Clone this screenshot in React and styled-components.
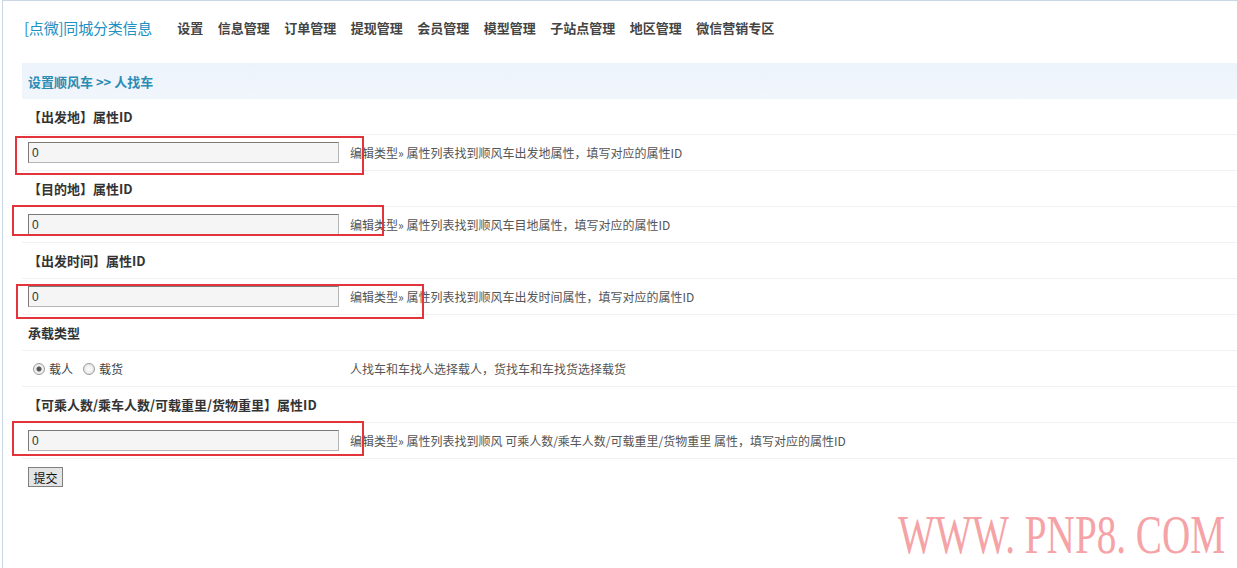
import React from "react"
import styled, { createGlobalStyle } from "styled-components"

const GlobalStyle = createGlobalStyle`
  html, body {
    margin: 0;
    padding: 0;
    background: #fff;
  }
  body {
    font-family: "Noto Sans CJK SC", "Liberation Sans", sans-serif;
    font-size: 12px;
    color: #333;
  }
`

const Page = styled.div`
  position: relative;
  height: 567px;
  margin-left: 2px;
  border-top: 1px solid #c9d7e4;
  border-left: 1px solid #c9d7e4;
  overflow: hidden;
`

const Header = styled.header`
  display: flex;
  align-items: center;
  height: 62px;
  padding: 0 0 10px 21px;
  box-sizing: border-box;
`

const Logo = styled.div`
  font-size: 15px;
  color: #2190c2;
  margin-right: 25px;
  letter-spacing: -0.2px;
`

const Nav = styled.nav`
  display: flex;
  gap: 14.5px;
`

const NavLink = styled.a`
  font-size: 13px;
  font-weight: bold;
  color: #444;
  text-decoration: none;
`

const Crumb = styled.div`
  display: flex;
  align-items: center;
  height: 36px;
  margin-left: 19px;
  padding-left: 6px;
  background: linear-gradient(#edf3fc, #f1f6fb);
  font-size: 13px;
  font-weight: bold;
  color: #2b8cb4;
`

const Table = styled.div`
  margin-left: 19px;
`

const Row = styled.div`
  display: grid;
  grid-template-columns: 324px 1fr;
  align-items: center;
  height: 36px;
  border-bottom: ${(p) => (p.$last ? "none" : "1px solid #f1f1f1")};
  box-sizing: border-box;
`

const Label = styled.div`
  grid-column: 1 / 3;
  padding-left: 6px;
  font-size: 13px;
  font-weight: bold;
  color: #333;
`

const Cell = styled.div`
  display: flex;
  align-items: center;
  padding-left: 6px;
`

const Help = styled.div`
  padding-left: 4px;
  font-size: 12px;
  color: #555;
`

const Input = styled.input`
  box-sizing: border-box;
  width: 311px;
  height: 21px;
  padding: 0 3px;
  border: 1px solid #b5b5b5;
  border-top-color: #7a7a7a;
  border-left-color: #7a7a7a;
  background: #f5f5f5;
  font-family: "Liberation Sans", sans-serif;
  font-size: 12px;
  color: #333;
  outline: none;
`

const Radio = styled.label`
  display: flex;
  align-items: center;
  margin-left: 5px;
  margin-right: 5px;
  font-size: 12px;
  color: #444;
`

const Dot = styled.span`
  width: 10px;
  height: 10px;
  margin-right: 4px;
  border-radius: 50%;
  border: 1px solid #9a9a9a;
  background: ${(p) =>
    p.$on
      ? "radial-gradient(circle, #555 0 2px, #eee 3px)"
      : "radial-gradient(circle, #fff, #ddd)"};
`

const Submit = styled.button`
  width: 35px;
  height: 20px;
  padding: 0;
  border: 1px solid #7f7f7f;
  background: #e4e4e4;
  font-family: "Noto Sans CJK SC", sans-serif;
  font-size: 12px;
  color: #111;
`

const Mark = styled.div`
  position: absolute;
  box-sizing: border-box;
  border: 2px solid #e2343a;
`

const Watermark = styled.div`
  position: absolute;
  left: 895px;
  top: 507px;
  width: 330px;
  font-family: "Liberation Serif", serif;
  font-size: 54px;
  line-height: 1;
  color: #f5a3a6;
  white-space: nowrap;
  transform: scaleX(0.725);
  transform-origin: left center;
`

const navItems = [
  "设置",
  "信息管理",
  "订单管理",
  "提现管理",
  "会员管理",
  "模型管理",
  "子站点管理",
  "地区管理",
  "微信营销专区",
]

const fields = [
  { label: "【出发地】属性ID", help: "编辑类型» 属性列表找到顺风车出发地属性，填写对应的属性ID" },
  { label: "【目的地】属性ID", help: "编辑类型» 属性列表找到顺风车目地属性，填写对应的属性ID" },
  { label: "【出发时间】属性ID", help: "编辑类型» 属性列表找到顺风车出发时间属性，填写对应的属性ID" },
]

const marks = [
  { left: 12, top: 135, width: 349, height: 39 },
  { left: 9, top: 204, width: 372, height: 31 },
  { left: 13, top: 283, width: 408, height: 35 },
  { left: 9, top: 420, width: 352, height: 35 },
]

const App = () => {
  return (
    <Page>
      <GlobalStyle />
      <Header>
        <Logo>[点微]同城分类信息</Logo>
        <Nav>
          {navItems.map((item) => (
            <NavLink key={item} href="#">
              {item}
            </NavLink>
          ))}
        </Nav>
      </Header>
      <Crumb>设置顺风车 &gt;&gt; 人找车</Crumb>
      <Table>
        {fields.map((f) => (
          <React.Fragment key={f.label}>
            <Row>
              <Label>{f.label}</Label>
            </Row>
            <Row>
              <Cell>
                <Input defaultValue="0" />
              </Cell>
              <Help>{f.help}</Help>
            </Row>
          </React.Fragment>
        ))}
        <Row>
          <Label>承载类型</Label>
        </Row>
        <Row>
          <Cell>
            <Radio>
              <Dot $on />
              载人
            </Radio>
            <Radio>
              <Dot />
              载货
            </Radio>
          </Cell>
          <Help>人找车和车找人选择载人，货找车和车找货选择载货</Help>
        </Row>
        <Row>
          <Label>【可乘人数/乘车人数/可载重里/货物重里】属性ID</Label>
        </Row>
        <Row>
          <Cell>
            <Input defaultValue="0" />
          </Cell>
          <Help>编辑类型» 属性列表找到顺风 可乘人数/乘车人数/可载重里/货物重里 属性，填写对应的属性ID</Help>
        </Row>
        <Row $last>
          <Cell>
            <Submit>提交</Submit>
          </Cell>
        </Row>
      </Table>
      {marks.map((m, i) => (
        <Mark key={i} style={m} />
      ))}
      <Watermark>WWW. PNP8. COM</Watermark>
    </Page>
  )
}

export default App
